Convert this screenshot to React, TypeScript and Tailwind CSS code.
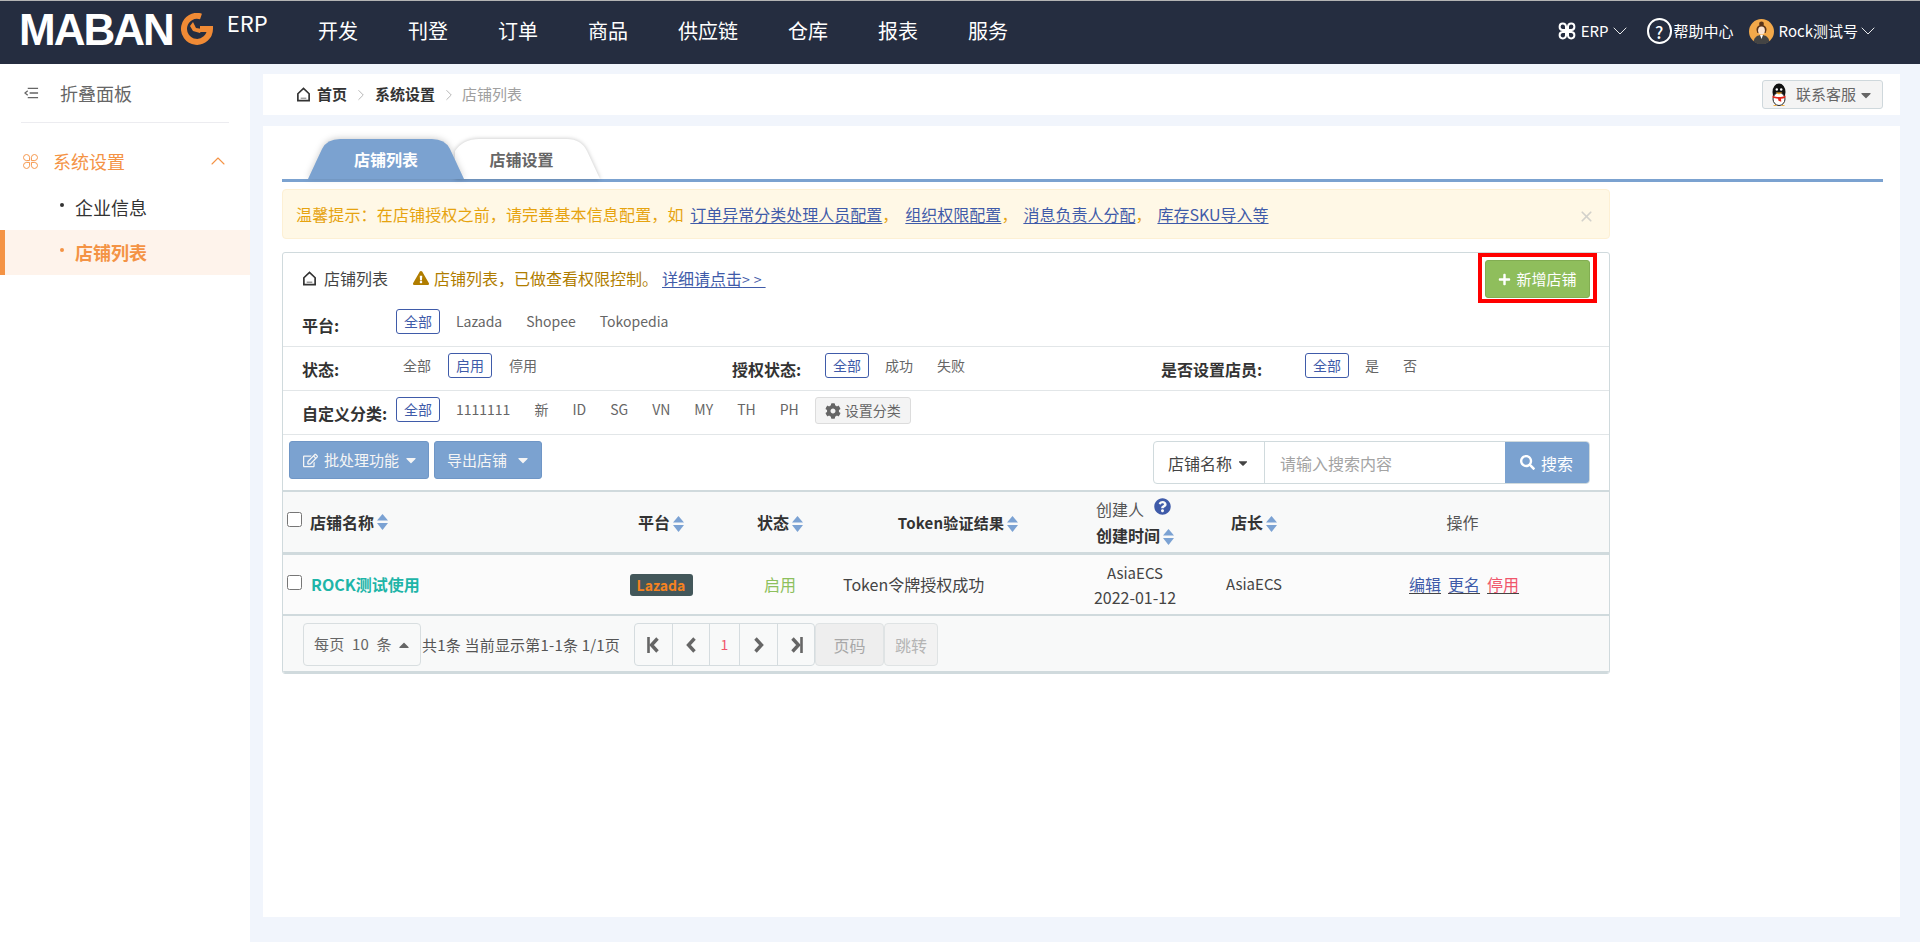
import { ChevronDown, ChevronRight, ChevronUp, X } from "lucide-react";
import {
  FaCaretDown,
  FaCaretUp,
  FaCog,
  FaExclamationTriangle,
  FaPlus,
  FaQuestionCircle,
  FaRegEdit,
  FaSearch,
} from "react-icons/fa";

const navItems = ["开发", "刊登", "订单", "商品", "供应链", "仓库", "报表", "服务"];

function Petals({ className, strokeWidth = 1.4 }: { className: string; strokeWidth?: number }) {
  return (
    <svg viewBox="0 0 18 18" fill="none" stroke="currentColor" strokeWidth={strokeWidth} className={className}>
      <path d="M8 8V4.5A3.2 3.2 0 1 0 4.5 8H8Z" />
      <path d="M10 8V4.5A3.2 3.2 0 1 1 13.5 8H10Z" />
      <path d="M8 10v3.5A3.2 3.2 0 1 1 4.5 10H8Z" />
      <path d="M10 10v3.5a3.2 3.2 0 1 0 3.5-3.5H10Z" />
    </svg>
  );
}

function HomeIcon({ className }: { className: string }) {
  return (
    <svg viewBox="0 0 16 16" fill="none" stroke="currentColor" strokeWidth="1.8" className={className}>
      <path d="M2 7.2 8 1.5l6 5.700V14.500H2V7.200Z" />
      <path d="M5 12h6" strokeWidth="1.400" opacity="0.5" />
    </svg>
  );
}

function SortIcon() {
  return (
    <svg viewBox="0 0 11 16" className="ml-[3px] inline-block h-[16px] w-[11px] shrink-0 align-[-3px]" fill="#7ba2d3">
      <path d="M5.500 0 11 6.500H0L5.500 0Z" />
      <path d="M0 9h11l-5.500 7L0 9Z" />
    </svg>
  );
}

function PagerArrow({ dir, bar }: { dir: "left" | "right"; bar?: boolean }) {
  return (
    <svg viewBox="0 0 14 16" className="h-[16px] w-[14px]" fill="none" stroke="#666" strokeWidth="3.400">
      {dir === "left" ? <path d="M10.500 1.500 4.500 8l6 6.500" /> : <path d="M3.500 1.500 9.500 8l-6 6.500" />}
      {bar && (dir === "left" ? <path d="M1.500 0v16" strokeWidth="2.600" /> : <path d="M12.500 0v16" strokeWidth="2.600" />)}
    </svg>
  );
}

function Logo() {
  return (
    <div className="flex w-[318px] shrink-0 items-start pl-[19px] pt-[4px]">
      <span className="font-['Liberation_Sans',sans-serif] text-[44px] font-bold leading-[50px] tracking-[-2px] text-white">
        MABAN
      </span>
      <svg viewBox="0 0 32 32" className="ml-[8px] mt-[8px] h-[32px] w-[32px]" fill="none">
        <path d="M20 3.500A13 13 0 1 0 29 16H19" stroke="#f08a35" strokeWidth="6" />
        <path d="M12 9l3 6 6 1-2 4-7-2-3-5 3-4Z" fill="#f08a35" />
      </svg>
      <span className="ml-[14px] mt-[3px] text-[22px] leading-[28px] text-white">ERP</span>
    </div>
  );
}

function QQIcon() {
  return (
    <svg viewBox="0 0 18 24" className="h-[24px] w-[18px]">
      <ellipse cx="9" cy="9" rx="6.500" ry="8.500" fill="#111" />
      <ellipse cx="9" cy="16" rx="6" ry="6.500" fill="#fff" stroke="#222" strokeWidth="1" />
      <circle cx="6.800" cy="6.500" r="1.200" fill="#fff" />
      <circle cx="11.200" cy="6.500" r="1.200" fill="#fff" />
      <path d="M5.500 9.500h7L9 11.500 5.500 9.500Z" fill="#f5a623" />
      <path d="M2.500 12.500c4 2 9 2 13 0v2c-1.500.8-3 1.200-4.500 1.300l.3 3-2.800-1-.5-2.100c-2-.1-4-.5-5.500-1.200v-2Z" fill="#e1251b" />
      <path d="M3 23c1-1.500 3-1.500 4 0H3ZM11 23c1-1.500 3-1.500 4 0h-4Z" fill="#f5a623" />
    </svg>
  );
}

function Avatar() {
  return (
    <svg viewBox="0 0 25 25" className="h-[25px] w-[25px]">
      <circle cx="12.500" cy="12.500" r="12.500" fill="#f3a94a" />
      <circle cx="12.500" cy="5" r="2.400" fill="#5a3418" />
      <path d="M7.500 11c0-3.500 2-5 5-5s5 1.500 5 5l-.8 3H8.300l-.8-3Z" fill="#5a3418" />
      <ellipse cx="12.500" cy="11.500" rx="3.400" ry="4" fill="#fbe3cf" />
      <path d="M4.500 22.500c1-4.500 4-6.500 8-6.500s7 2 8 6.500A12.500 12.500 0 0 1 4.500 22.500Z" fill="#444" />
      <path d="M11 16h3l-1.500 4-1.500-4Z" fill="#fff" />
    </svg>
  );
}

function TopBar() {
  return (
    <header className="flex h-16 shrink-0 items-start border-t border-[#b4b4b4] bg-[#252d40]">
      <Logo />
      <nav className="flex gap-[50px] pt-[15px] text-[20px] leading-[30px] text-white">
        {navItems.map((item) => (
          <span key={item}>{item}</span>
        ))}
      </nav>
      <div className="ml-auto flex items-center pr-[40px] pt-[17px] text-white">
        <Petals className="h-[18px] w-[18px]" strokeWidth={2} />
        <span className="ml-[5px] text-[15px] leading-[26px]">ERP</span>
        <ChevronDown size={24} strokeWidth={0.9} className="-ml-[1px]" />
        <span className="ml-[15px] flex h-[26px] w-[25px] items-center justify-center rounded-full border-2 border-white text-[17px] font-medium leading-none">
          ?
        </span>
        <span className="ml-[2px] text-[15px] leading-[26px]">帮助中心</span>
        <span className="ml-[15px]">
          <Avatar />
        </span>
        <span className="ml-[5px] text-[15px] leading-[26px]">Rock测试号</span>
        <ChevronDown size={24} strokeWidth={0.9} className="-ml-[2px]" />
      </div>
    </header>
  );
}

function Sidebar() {
  return (
    <aside className="w-[250px] shrink-0 bg-white text-[18px]">
      <div className="mx-[21px] flex h-[59px] items-center border-b border-[#ececf0] text-[#666]">
        <svg viewBox="0 0 16 12" fill="none" stroke="currentColor" strokeWidth="1.400" className="ml-[3px] h-[12px] w-[15px]">
          <path d="M4 1h11M6 6h9M4 11h11" />
          <path d="M4 3.500 1 6l3 2.500" />
        </svg>
        <span className="ml-[21px]">折叠面板</span>
      </div>
      <div className="mt-[18px] flex h-[40px] items-center pl-[22px] text-[#f49345]">
        <Petals className="h-[17px] w-[17px]" strokeWidth={1} />
        <span className="ml-[14px]">系统设置</span>
        <ChevronUp size={24} strokeWidth={1.100} className="ml-[81px]" />
      </div>
      <div className="mt-[4px] flex h-[45px] items-center pl-[60px] text-[#333]">
        <span className="h-[4px] w-[4px] -translate-y-[3px] rounded-full bg-[#333]" />
        <span className="ml-[11px]">企业信息</span>
      </div>
      <div className="flex h-[45px] items-center border-l-[5px] border-[#f49345] bg-[#fef3eb] pl-[55px] font-bold text-[#f49345]">
        <span className="h-[4px] w-[4px] -translate-y-[3px] rounded-full bg-[#f49345]" />
        <span className="ml-[11px]">店铺列表</span>
      </div>
    </aside>
  );
}

function Breadcrumb() {
  return (
    <div className="flex h-[41px] items-center bg-white pl-[33px] pr-[17px] text-[15px]">
      <HomeIcon className="h-[17px] w-[15px] text-[#333]" />
      <span className="ml-[6px] font-bold text-[#333]">首页</span>
      <ChevronRight size={18} strokeWidth={1.300} className="mx-[5px] text-[#b5b5b5]" />
      <span className="font-bold text-[#333]">系统设置</span>
      <ChevronRight size={18} strokeWidth={1.300} className="ml-[5px] mr-[4px] text-[#b5b5b5]" />
      <span className="text-[#a0a0a0]">店铺列表</span>
      <button className="ml-auto flex h-[29px] w-[121px] items-center rounded-[3px] border border-[#cfd8dc] bg-[#f4f4f4] pl-[7px] text-[15px] text-[#666]">
        <QQIcon />
        <span className="ml-[8px]">联系客服</span>
        <FaCaretDown className="ml-[2px] text-[16px] text-[#666]" />
      </button>
    </div>
  );
}

function Tabs() {
  return (
    <div className="flex h-[43px] border-b-[3px] border-[#7ba2d0] pl-[26px]">
      <div className="relative z-10 flex h-[40px] w-[156px] items-center justify-center text-[16px] font-bold text-white">
        <svg viewBox="0 0 156 40" className="absolute inset-0 h-full w-full drop-shadow-[0_-1px_3px_rgba(0,0,0,0.18)]">
          <path d="M0 40 14 10Q19 0 32 0H124Q137 0 142 10L156 40Z" fill="#7ba2d0" />
        </svg>
        <span className="relative">店铺列表</span>
      </div>
      <div className="relative -ml-[9px] flex h-[40px] w-[145px] items-center justify-center pr-[12px] text-[16px] font-bold text-[#666]">
        <svg viewBox="0 0 145 40" className="absolute inset-0 h-full w-full drop-shadow-[0_0_2px_rgba(0,0,0,0.25)]">
          <path d="M0 40 V12Q8 0 24 0H112Q126 0 132 12L145 40Z" fill="#fff" />
        </svg>
        <span className="relative">店铺设置</span>
      </div>
    </div>
  );
}

function Notice() {
  const link = "text-[#3f5ba9] underline underline-offset-2";
  return (
    <div className="mt-[7px] flex h-[50px] w-[1328px] items-center rounded-[4px] border border-[#fdf0d4] bg-[#fff8e6] pl-[13px] pr-[14px] text-[16px] whitespace-pre text-[#e6a30f]">
      <span className="pr-[3px] tracking-[0.15px]">温馨提示：在店铺授权之前，请完善基本信息配置，如 </span>
      <span className={link}>订单异常分类处理人员配置</span>
      <span className="w-[23px]">，</span>
      <span className={link}>组织权限配置</span>
      <span className="w-[22px]">，</span>
      <span className={link}>消息负责人分配</span>
      <span className="w-[22px]">，</span>
      <span className={link}>库存SKU导入等</span>
      <X size={17} strokeWidth={2.400} className="ml-auto mt-[4px] text-[#d3d1cb]" />
    </div>
  );
}

function FilterItem({ label, active }: { label: string; active?: boolean }) {
  return (
    <span
      className={
        active
          ? "h-[25px] rounded-[3px] border border-[#3f5ba9] px-[7px] leading-[23px] text-[#3f5ba9]"
          : "h-[25px] border border-transparent px-[7px] leading-[23px] text-[#666]"
      }
    >
      {label}
    </span>
  );
}

function FilterLabel({ text, width }: { text: string; width: string }) {
  return <span className={`${width} mt-[4px] shrink-0 text-[16px] font-bold leading-[25px] text-[#333]`}>{text}</span>;
}

function FilterRows() {
  return (
    <div className="text-[14px]">
      <div className="flex h-[44px] border-b border-[#e2e6e8] pl-[19px] pt-[6px]">
        <FilterLabel text="平台:" width="w-[94px]" />
        <div className="flex gap-2">
          <FilterItem label="全部" active />
          <FilterItem label="Lazada" />
          <FilterItem label="Shopee" />
          <FilterItem label="Tokopedia" />
        </div>
      </div>
      <div className="flex h-[44px] border-b border-[#e2e6e8] pl-[19px] pt-[6px]">
        <div className="flex w-[430px]">
          <FilterLabel text="状态:" width="w-[93px]" />
          <div className="flex gap-[9px]">
            <FilterItem label="全部" />
            <FilterItem label="启用" active />
            <FilterItem label="停用" />
          </div>
        </div>
        <div className="flex w-[429px]">
          <FilterLabel text="授权状态:" width="w-[93px]" />
          <div className="flex gap-2">
            <FilterItem label="全部" active />
            <FilterItem label="成功" />
            <FilterItem label="失败" />
          </div>
        </div>
        <div className="flex">
          <FilterLabel text="是否设置店员:" width="w-[144px]" />
          <div className="flex gap-2">
            <FilterItem label="全部" active />
            <FilterItem label="是" />
            <FilterItem label="否" />
          </div>
        </div>
      </div>
      <div className="flex h-[44px] border-b border-[#e2e6e8] pl-[19px] pt-[6px]">
        <FilterLabel text="自定义分类:" width="w-[94px]" />
        <div className="flex gap-2">
          <FilterItem label="全部" active />
          {["1111111", "新", "ID", "SG", "VN", "MY", "TH", "PH"].map((item) => (
            <FilterItem key={item} label={item} />
          ))}
          <button className="flex h-[27px] w-[96px] items-center justify-center gap-[4px] rounded-[3px] border border-[#dcdcdc] bg-[#f4f4f4] text-[#666]">
            <FaCog className="text-[16px]" />
            设置分类
          </button>
        </div>
      </div>
    </div>
  );
}

function Toolbar() {
  return (
    <div className="flex h-[55px] items-start pl-[6px] pr-[19px] pt-[6px] text-[16px]">
      <button className="flex h-[38px] w-[140px] items-center rounded-[3px] border border-[#6f96c6] bg-[#7ba2d0] pl-[13px] text-[15px] text-[#f5f5f5]">
        <FaRegEdit className="text-[15px]" />
        <span className="ml-[6px]">批处理功能</span>
        <FaCaretDown className="ml-[4px] text-[16px]" />
      </button>
      <button className="ml-[5px] flex h-[38px] w-[108px] items-center rounded-[3px] border border-[#6f96c6] bg-[#7ba2d0] pl-[12px] text-[15px] text-[#f5f5f5]">
        <span>导出店铺</span>
        <FaCaretDown className="ml-[8px] text-[16px]" />
      </button>
      <div className="ml-auto flex h-[43px] overflow-hidden rounded-[4px] border border-[#d0dadd]">
        <div className="flex w-[111px] items-center border-r border-[#d0dadd] pl-[14px] text-[#444]">
          店铺名称
          <FaCaretDown className="ml-[4px] text-[14px]" />
        </div>
        <input
          placeholder="请输入搜索内容"
          className="w-[240px] bg-white pl-[15px] text-[16px] outline-none placeholder:text-[#a3a3a3]"
        />
        <button className="flex w-[84px] items-center bg-[#7ba2d0] pl-[15px] text-white">
          <FaSearch className="text-[15px]" />
          <span className="ml-[6px]">搜索</span>
        </button>
      </div>
    </div>
  );
}

function StoreTable() {
  const th = "text-[16px] font-bold text-[#333]";
  return (
    <table className="w-full table-fixed border-collapse text-[16px] text-[#444]">
      <thead>
        <tr className="h-[62px] border-t-2 border-b-[3px] border-[#d0dadd] bg-[#f8f9f9]">
          <th className={`${th} w-[317px] pl-[4px] text-left`}>
            <span className="flex items-center">
              <input type="checkbox" className="h-[15px] w-[15px] -translate-y-[2px]" />
              <span className="ml-[8px]">店铺名称</span>
              <SortIcon />
            </span>
          </th>
          <th className={`${th} w-[122px]`}>
            平台
            <SortIcon />
          </th>
          <th className={`${th} w-[116px]`}>
            状态
            <SortIcon />
          </th>
          <th className={`${th} w-[240px]`}>
            <span className="text-[15px] font-semibold tracking-[0.2px]">Token验证结果</span>
            <SortIcon />
          </th>
          <th className={`${th} w-[114px]`}>
            <span className="mx-auto block w-[78px] text-left leading-[26px]">
              <span className="flex items-center font-normal text-[#555]">
                创建人
                <FaQuestionCircle className="ml-[10px] -translate-y-[2px] text-[17px] text-[#3f5ba9]" />
              </span>
              <span className="block whitespace-nowrap">
                创建时间
                <SortIcon />
              </span>
            </span>
          </th>
          <th className={`${th} w-[124px]`}>
            店长
            <SortIcon />
          </th>
          <th className="text-[16px] font-normal text-[#555]">操作</th>
        </tr>
      </thead>
      <tbody>
        <tr className="h-[62px] border-b-2 border-[#d0dadd] bg-[#fbfbfb]">
          <td className="pl-[4px]">
            <span className="flex items-center">
              <input type="checkbox" className="h-[15px] w-[15px] -translate-y-[2px]" />
              <span className="ml-[9px] font-semibold text-[#1eb5a8]">ROCK测试使用</span>
            </span>
          </td>
          <td className="text-center">
            <span className="inline-block h-[22px] w-[63px] rounded-[3px] bg-[#43575a] text-[14px] font-bold leading-[22px] text-[#f58220]">
              Lazada
            </span>
          </td>
          <td className="text-center text-[#8dc05d]">启用</td>
          <td className="pl-[5px]">Token令牌授权成功</td>
          <td className="text-center leading-[24px]">
            <span className="text-[15px]">AsiaECS</span>
            <br />
            2022-01-12
          </td>
          <td className="text-center text-[15px]">AsiaECS</td>
          <td className="pl-[93px]">
            <span className="flex gap-[7px] underline underline-offset-2">
              <span className="text-[#3f5ba9]">编辑</span>
              <span className="text-[#3f5ba9]">更名</span>
              <span className="text-[#f0566b]">停用</span>
            </span>
          </td>
        </tr>
      </tbody>
    </table>
  );
}

function Pagination() {
  const cell = "flex items-center justify-center border-r border-[#d5dcdf] text-[#666]";
  return (
    <div className="flex h-[57px] border-b-2 border-[#d0dadd] bg-[#f8f9f9] pl-[20px] pt-[7px] text-[15px] text-[#555]">
      <div className="flex h-[43px] w-[118px] items-center rounded-[4px] border border-[#d8dee0] pl-[10px] tracking-[0.3px] text-[#666]">
        每页 &nbsp;10 &nbsp;条
        <FaCaretUp className="ml-[4px] text-[16px]" />
      </div>
      <span className="w-[213px] pl-[1px] leading-[43px] tracking-[0.2px]">共1条 当前显示第1-1条 1/1页</span>
      <div className="flex h-[43px] w-[181px] rounded-[4px] border border-[#d5dcdf]">
        <span className={`${cell} w-[38px]`}>
          <PagerArrow dir="left" bar />
        </span>
        <span className={`${cell} w-[37px]`}>
          <PagerArrow dir="left" />
        </span>
        <span className={`${cell} w-[30px] text-[14px] text-[#f0566b]`}>1</span>
        <span className={`${cell} w-[38px]`}>
          <PagerArrow dir="right" />
        </span>
        <span className="flex flex-1 items-center justify-center text-[#666]">
          <PagerArrow dir="right" bar />
        </span>
      </div>
      <span className="flex h-[43px] w-[69px] items-center justify-center rounded-[4px] border border-[#dfe3e4] bg-[#eeeeee] text-[16px] text-[#a8a8a8]">
        页码
      </span>
      <span className="flex h-[43px] w-[54px] items-center justify-center rounded-[4px] border border-[#dfe3e4] bg-[#f2f2f2] text-[16px] text-[#b4b4b4]">
        跳转
      </span>
    </div>
  );
}

function StorePanel() {
  return (
    <section className="mt-[13px] w-[1328px] overflow-hidden rounded-[3px] border border-[#d0dadd]">
      <div className="flex h-[50px] items-start justify-between pl-[19px]">
        <div className="flex h-[50px] items-center text-[16px]">
          <HomeIcon className="h-[15px] w-[15px] text-[#333]" />
          <span className="ml-[7px] text-[#444]">店铺列表</span>
          <FaExclamationTriangle className="ml-[25px] text-[16px] text-[#b07d00]" />
          <span className="ml-[5px] pr-[4px] text-[#b07d00]">店铺列表，已做查看权限控制。</span>
          <span className="text-[#3f5ba9] underline underline-offset-2">
            详细请点击<span className="text-[14px] tracking-[4px]">&gt;&gt;</span>
          </span>
        </div>
        <div className="mr-[12px] border-4 border-[#ff0000] p-[3px] pb-[1px]">
          <button className="flex h-[38px] w-[105px] items-center justify-center rounded-[3px] border border-[#82ad52] bg-[#8fbe5c] text-[15px] text-white">
            <FaPlus className="mr-[5px] text-[13px]" />
            新增店铺
          </button>
        </div>
      </div>
      <FilterRows />
      <Toolbar />
      <StoreTable />
      <Pagination />
    </section>
  );
}

export default function App() {
  return (
    <div className="flex h-[942px] flex-col overflow-hidden bg-[#f1f5fc] font-['Noto_Sans_CJK_SC',sans-serif]">
      <TopBar />
      <div className="flex flex-1">
        <Sidebar />
        <main className="flex flex-1 flex-col pb-[25px] pl-[13px] pr-[20px] pt-[10px]">
          <Breadcrumb />
          <div className="mt-[11px] flex-1 bg-white pl-[19px] pr-[17px] pt-[13px]">
            <Tabs />
            <Notice />
            <StorePanel />
          </div>
        </main>
      </div>
    </div>
  );
}
